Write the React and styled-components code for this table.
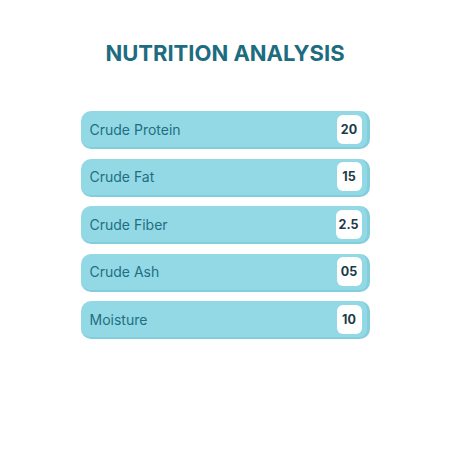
import React from "react";
import styled, { createGlobalStyle } from "styled-components";

const GlobalStyle = createGlobalStyle`
  body {
    margin: 0;
    background: #ffffff;
    font-family: "Inter", "Liberation Sans", sans-serif;
  }
`;

const Page = styled.div`
  width: 450px;
  height: 450px;
  box-sizing: border-box;
  padding-top: 39px;
  display: flex;
  flex-direction: column;
  align-items: center;
`;

const Title = styled.h1`
  margin: 0 0 44px;
  color: #1d6c80;
  font-family: "Inter", sans-serif;
  font-weight: 700;
  font-size: 22px;
  letter-spacing: 0;
  line-height: 28px;
`;

const List = styled.div`
  display: flex;
  flex-direction: column;
  gap: 9.5px;
  width: 289px;
`;

const Row = styled.div`
  height: 38px;
  box-sizing: border-box;
  display: flex;
  align-items: center;
  justify-content: space-between;
  padding: 0 5px 0 9px;
  background: #93d9e5;
  border-radius: 10px;
  border-right: 3px solid #82cedb;
  border-bottom: 2px solid #82cedb;
`;

const Label = styled.span`
  color: #1f6e82;
  font-family: "Inter", sans-serif;
  font-size: 14px;
`;

const Value = styled.span`
  min-width: 25px;
  height: 29px;
  box-sizing: border-box;
  padding: 0 3px;
  display: flex;
  align-items: center;
  justify-content: center;
  background: #ffffff;
  border-radius: 6px;
  color: #1d3a48;
  font-family: "Inter", sans-serif;
  font-weight: 700;
  font-size: 12.5px;
`;

const items = [
  ["Crude Protein", "20"],
  ["Crude Fat", "15"],
  ["Crude Fiber", "2.5"],
  ["Crude Ash", "05"],
  ["Moisture", "10"],
];

export default function App() {
  return (
    <>
      <GlobalStyle />
      <Page>
        <Title>NUTRITION ANALYSIS</Title>
        <List>
          {items.map(([label, value]) => (
            <Row key={label}>
              <Label>{label}</Label>
              <Value>{value}</Value>
            </Row>
          ))}
        </List>
      </Page>
    </>
  );
}
